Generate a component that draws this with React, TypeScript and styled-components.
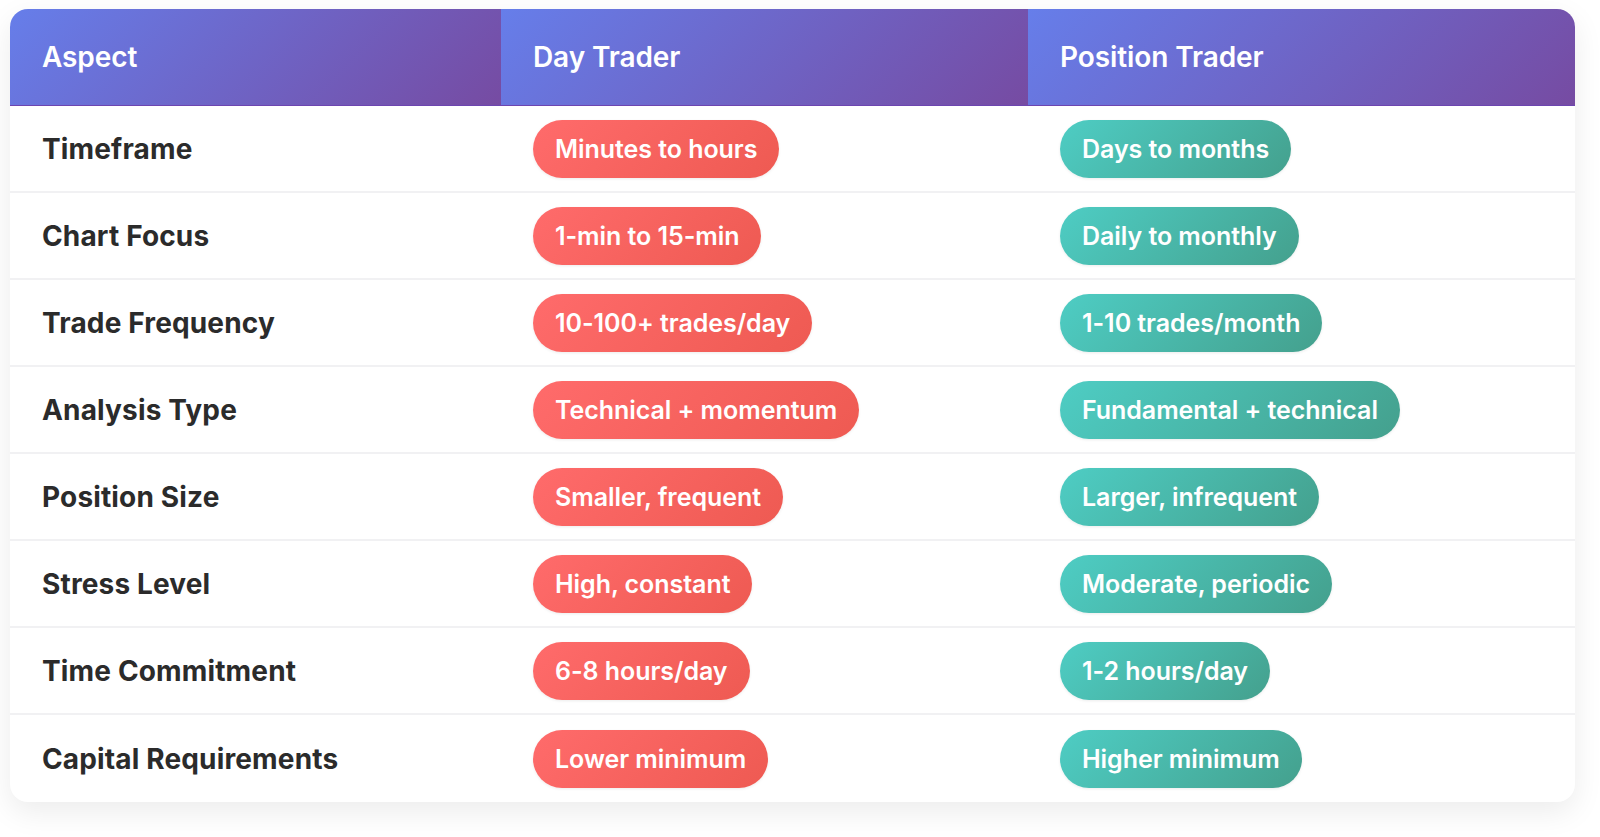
import React from "react";
import styled, { createGlobalStyle } from "styled-components";

const Global = createGlobalStyle`
  html, body { margin: 0; padding: 0; background: #ffffff; }
  body { font-family: Inter, "Noto Sans", "Liberation Sans", sans-serif; -webkit-font-smoothing: antialiased; }
  * { box-sizing: border-box; }
`;

const Page = styled.div`
  padding: 9px 25px 35px 10px;
`;

const Table = styled.div`
  width: 1565px;
  display: grid;
  grid-template-columns: 491px 527px 547px;
  background: #ffffff;
  border-radius: 18px;
  overflow: hidden;
  box-shadow: 0 10px 30px rgba(0, 0, 0, 0.08);
`;

const HeadCell = styled.div`
  height: 97px;
  display: flex;
  align-items: center;
  padding: 0 32px;
  background: linear-gradient(135deg, #667eea 0%, #764ba2 100%);
  border-bottom: 1px solid #6d45b0;
  color: #ffffff;
  font-size: 28px;
  font-weight: 600;
  letter-spacing: -0.1px;
`;

const Cell = styled.div<{ $last: boolean }>`
  height: 87px;
  display: flex;
  align-items: center;
  padding: 0 32px;
  border-bottom: ${(p) => (p.$last ? "none" : "2px solid #f1f1f3")};
`;

const Label = styled.span`
  color: #2b2b2b;
  font-size: 28px;
  font-weight: 700;
  letter-spacing: 0.15px;
`;

const Badge = styled.span<{ $kind: "day" | "pos" }>`
  display: inline-flex;
  align-items: center;
  height: 58px;
  padding: 0 22px;
  border-radius: 29px;
  color: #ffffff;
  font-size: 25px;
  font-weight: 600;
  letter-spacing: -0.05px;
  white-space: nowrap;
  background: ${(p) =>
    p.$kind === "day"
      ? "linear-gradient(135deg, #ff6b6b 0%, #ee5a52 100%)"
      : "linear-gradient(135deg, #4ecdc4 0%, #44a08d 100%)"};
  box-shadow: 0 1px 3px rgba(0, 0, 0, 0.08);
`;

const rows: [string, string, string][] = [
  ["Timeframe", "Minutes to hours", "Days to months"],
  ["Chart Focus", "1-min to 15-min", "Daily to monthly"],
  ["Trade Frequency", "10-100+ trades/day", "1-10 trades/month"],
  ["Analysis Type", "Technical + momentum", "Fundamental + technical"],
  ["Position Size", "Smaller, frequent", "Larger, infrequent"],
  ["Stress Level", "High, constant", "Moderate, periodic"],
  ["Time Commitment", "6-8 hours/day", "1-2 hours/day"],
  ["Capital Requirements", "Lower minimum", "Higher minimum"],
];

export default function App() {
  return (
    <>
      <Global />
      <Page>
        <Table>
          <HeadCell>Aspect</HeadCell>
          <HeadCell>Day Trader</HeadCell>
          <HeadCell>Position Trader</HeadCell>
          {rows.map(([a, d, p], i) => {
            const last = i === rows.length - 1;
            return (
              <React.Fragment key={a}>
                <Cell $last={last}>
                  <Label>{a}</Label>
                </Cell>
                <Cell $last={last}>
                  <Badge $kind="day">{d}</Badge>
                </Cell>
                <Cell $last={last}>
                  <Badge $kind="pos">{p}</Badge>
                </Cell>
              </React.Fragment>
            );
          })}
        </Table>
      </Page>
    </>
  );
}
